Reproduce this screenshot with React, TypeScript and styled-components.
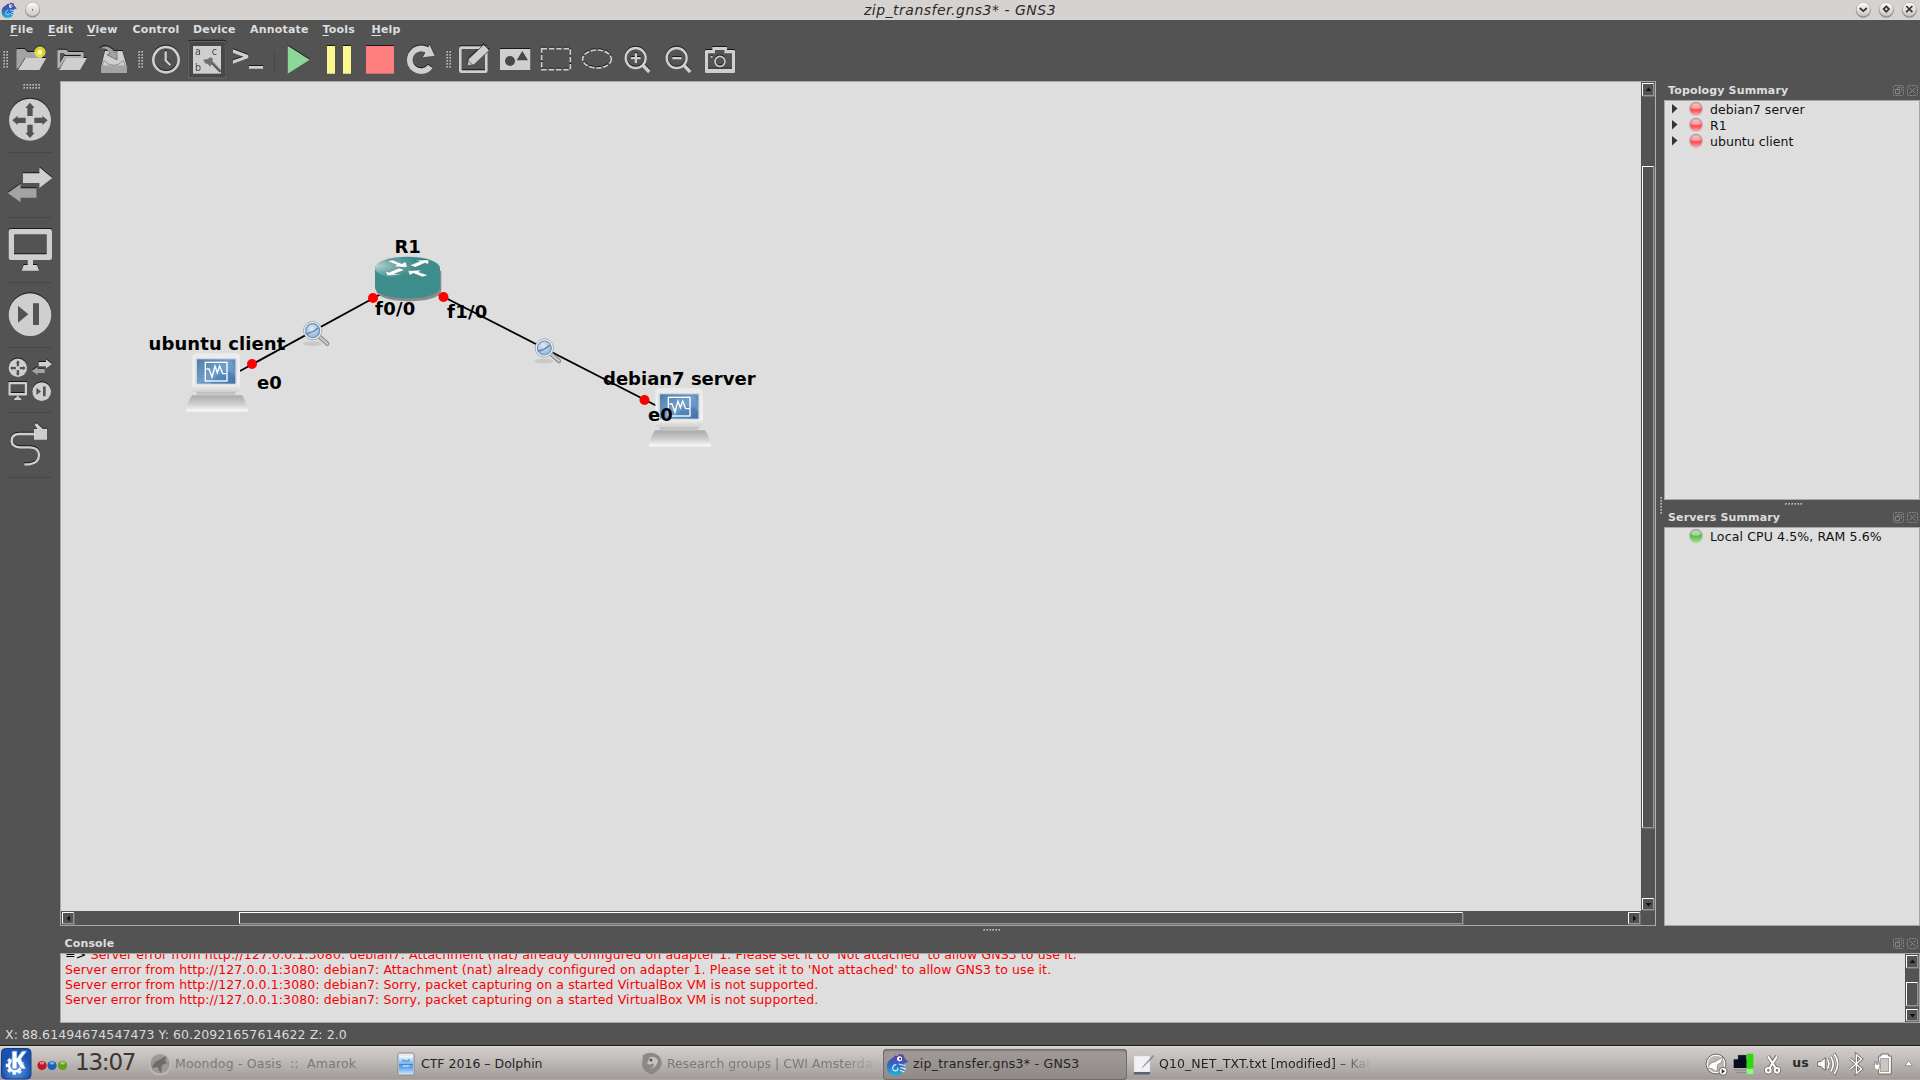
import React from "react";
import styled, { createGlobalStyle } from "styled-components";

const Global = createGlobalStyle`
  html, body { margin: 0; padding: 0; overflow: hidden; }
  body { background: #535353; font-family: "DejaVu Sans", "Liberation Sans", sans-serif; font-size: 12.5px; }
  * { box-sizing: border-box; }
  svg { display: block; flex: none; }
`;

const INK = "#cfcfcf";

const Screen = styled.div`
  width: 1920px; height: 1080px; display: flex; flex-direction: column;
  background: #535353; overflow: hidden; white-space: nowrap;
`;
const TitleBar = styled.header`
  height: 20px; flex: none; display: flex; justify-content: space-between;
  background: #d6d2cf; border-bottom: 1px solid #dad6d3;
`;
const TitleText = styled.div<{ $ls: number }>`
  font-style: italic; font-size: 14px; line-height: 20px; color: #2b2b2b; letter-spacing: ${p => p.$ls}px;
  padding-left: 23px;
`;
const MenuBar = styled.nav`height: 18px; flex: none; display: flex; padding-left: 10px;`;
const MenuItem = styled.div<{ $w: number }>`
  width: ${p => p.$w}px; font-weight: bold; font-size: 11px; line-height: 20px; color: #dedede;
  letter-spacing: 0.2px;
  u { text-underline-offset: 2px; text-decoration-thickness: 1px; }
`;
const Toolbar = styled.div`height: 43px; flex: none; display: flex;`;
const Shadowed = styled.svg`filter: drop-shadow(0 -1px 0.4px #181818);`;
const Workspace = styled.div`height: 845px; flex: none; display: flex;`;
const SideBar = styled.div`width: 60px; flex: none; display: flex; flex-direction: column;`;
const SideSlot = styled.div<{ $h: number }>`
  height: ${p => p.$h}px; width: 44px; margin-left: 8px; border-bottom: 1px solid #474747; flex: none;
  svg { margin-left: -8px; }
`;
const SceneFrame = styled.div`
  width: 1596px; flex: none; border: 1px solid #a6a6a6; border-right-color: #b0b0b0;
  display: grid; grid-template-columns: 1580px 14px; grid-template-rows: 829px 14px;
`;
const Scene = styled.div`position: relative; background: #dedede; overflow: hidden;`;
const NodeLabel = styled.div<{ $x: number; $y: number; $ls?: number }>`
  position: absolute; left: ${p => p.$x - 61}px; top: ${p => p.$y - 82}px;
  font-weight: bold; font-size: 18px; line-height: 20px; color: #000; letter-spacing: ${p => p.$ls ?? 0}px;
`;
const ScrollTrack = styled.div<{ $row?: boolean }>`
  display: flex; flex-direction: ${p => (p.$row ? "row" : "column")}; padding: 1px; background: #535353;
`;
const Bevel = styled.div<{ $w: number; $h: number }>`
  width: ${p => p.$w}px; height: ${p => p.$h}px; flex: none;
  border: 1px solid #fff; border-right-color: #959595; border-bottom-color: #959595;
  box-shadow: 1px 1px 0 #6f6f6f; display: flex; align-items: center; justify-content: center;
`;
const Space = styled.div<{ $s: number }>`flex: 0 0 ${p => p.$s}px;`;
const Splitter = styled.div`
  width: 8px; flex: none; display: flex; align-items: center; justify-content: center; padding: 4px 0 0 2px;
`;
const Dock = styled.aside`width: 256px; flex: none; display: flex; flex-direction: column;`;
const DockTitle = styled.div<{ $h: number; $pl: number }>`
  height: ${p => p.$h}px; flex: none; display: flex; justify-content: space-between; align-items: center;
  padding: 0 1px 1px ${p => p.$pl}px; font-weight: bold; font-size: 11px; color: #dedede;
  letter-spacing: 0.15px;
  svg { margin-top: 2px; }
`;
const ListFrame = styled.div<{ $h: number }>`
  height: ${p => p.$h}px; flex: none; border: 1px solid #a6a6a6; background: #dedede; color: #111;
`;
const TreeRow = styled.div<{ $ls?: number }>`
  height: 16px; display: flex; align-items: center; letter-spacing: ${p => p.$ls ?? 0.04}px; padding-top: 1px;
`;
const GripRow = styled.div<{ $h: number }>`
  height: ${p => p.$h}px; flex: none; display: flex; justify-content: center; padding: 3px 0 0 3px;
`;
const ConsoleFrame = styled.div`
  height: 70px; flex: none; margin-left: 60px; border: 1px solid #a6a6a6; background: #dedede;
  display: flex; justify-content: space-between; overflow: hidden;
`;
const Log = styled.div`margin-top: -7px; padding-left: 4px; color: #f60000;`;
const LogLine = styled.div`
  height: 15px; line-height: 15px; letter-spacing: 0.105px;
  b { font-weight: normal; color: #000; letter-spacing: 0.25px; }
`;
const Status = styled.div`
  height: 22px; flex: none; padding-left: 5px; line-height: 23px; color: #dadada; letter-spacing: 0.08px;
`;
const TaskBar = styled.footer`
  height: 35px; flex: none; display: flex; border-top: 1px solid #1d1a1c;
  background: linear-gradient(#dedad8 0, #cfcac8 3px, #c6c2bf 10px, #a19c99 33px, #b5b1ae 34px);
`;
const Clock = styled.div`width: 70px; font-size: 23px; line-height: 33px; color: #3a3634; letter-spacing: -1.2px;`;
const Task = styled.div<{ $active?: boolean; $dim?: boolean; $ls?: number }>`
  width: 244px; margin-right: 2px; height: 31px; margin-top: 3px; flex: none; display: flex; align-items: center;
  overflow: hidden; border-radius: 4px; letter-spacing: ${p => p.$ls ?? 0}px; padding-bottom: 2px;
  color: ${p => (p.$dim ? "#7c7876" : "#262322")};
  background: ${p => (p.$active ? "linear-gradient(#a19c9a, #8f8a88)" : "none")};
  box-shadow: ${p => (p.$active ? "inset 0 0 0 1px #716c6a, inset 0 2px 2px #807b79" : "none")};
  white-space: pre;
`;
const TaskIcon = styled.svg`margin: 0 4px 0 3px;`;
const Fade = styled.span`
  max-width: 212px; overflow: hidden;
  mask-image: linear-gradient(90deg, #000 176px, transparent 212px);
`;
const Tray = styled.div`display: flex; margin-left: auto;`;
const Layout = styled.div`
  width: 27px; text-align: center; font-weight: bold; font-size: 12.5px; line-height: 34px; color: #2b2928;
  letter-spacing: 0.2px;
`;

const Dots = ({ cols, rows, h = 3 }: { cols: number; rows: number; h?: number }) => (
  <svg width={cols * 3} height={rows * h}>
    {Array.from({ length: cols * rows }, (_, i) => {
      const x = (i % cols) * 3, y = Math.floor(i / cols) * h;
      return <g key={i}><rect x={x} y={y} width="2" height="2" fill="#8d8d8d" /><rect x={x + 1} y={y} width="1" height="1" fill="#c2c2c2" /></g>;
    })}
  </svg>
);
const Handle = styled.div<{ $w: number; $pl: number }>`width: ${p => p.$w}px; padding: 13px 0 0 ${p => p.$pl}px; flex: none;`;

/* toolbar glyphs are drawn on a grid of three units per pixel */
const Tool = ({ x, children }: { x: number; children: React.ReactNode }) => (
  <Shadowed width="41" height="43" viewBox={`${x} 114 123 129`} fill={INK}>{children}</Shadowed>
);
const FloatButtons = () => (
  <svg width="27" height="12" viewBox="0 0 27 12" fill="none" stroke="#858585">
    <rect x="1.5" y=".5" width="10" height="10" rx="1.5" strokeDasharray="2 .8" />
    <rect x="3.5" y="4.5" width="4" height="4" /><path d="M5.5 4V2.5h4v4H8" strokeDasharray="1.5 .7" />
    <rect x="15.5" y=".5" width="10" height="10" rx="1.5" strokeDasharray="2 .8" />
    <path d="M17.5 2.5l6 6M23.5 2.5l-6 6" />
  </svg>
);
const Arrow = ({ d }: { d: string }) => <svg width="7" height="7" viewBox="0 0 7 7"><path d={d} fill="#111" /></svg>;
const UP = "M.5 5L3.5 1.5L6.5 5z", DOWN = "M.5 2L3.5 5.5L6.5 2z", LEFT = "M5 .5L1.5 3.5L5 6.5z", RIGHT = "M2 .5L5.5 3.5L2 6.5z";

const WinButton = ({ d }: { d: string }) => (
  <svg width="23" height="20" viewBox="0 0 23 20">
    <circle cx="12.3" cy="10.2" r="7.5" fill="#8e8a87" />
    <circle cx="12.3" cy="9.3" r="7" fill="url(#btn)" stroke="#aaa6a3" strokeWidth=".6" />
    <path transform="translate(.8 0)" d={d} fill="none" stroke="#333" strokeWidth="1.7" />
  </svg>
);
const Ball = ({ c }: { c: "r" | "g" }) => (
  <svg width="16" height="16" viewBox="0 0 16 16">
    <circle cx="8" cy="6.6" r="6.8" fill={c === "r" ? "#a5a0a0" : "#96a393"} />
    <circle cx="8" cy="7.5" r="6.8" fill="#cdc8c8" opacity=".75" />
    <circle cx="8" cy="6.9" r="6" fill={`url(#ball${c})`} />
    <ellipse cx="8" cy="4.3" rx="4.2" ry="2.5" fill="#fff" opacity=".38" />
  </svg>
);
const Chameleon = () => (
  <>
    <path d="M6 4l2-2 2 .5L11.500 .5 13 1.500l2-.5 .5 2 1.500 2.500 2.500 2-3.500 1.500-1 2.500q1.500 4-2 6.500-4 2.500-8.500 1Q1 17 .8 12 .5 7 6 4z" fill="url(#cham)" />
    <circle cx="11.8" cy="5" r="2.2" fill="#fff" /><circle cx="12.3" cy="5" r=".9" fill="#222" />
    <path d="M9 10c-3.500 0-4.500 5-1 5.500 2.500.3 3-2 1.500-2.500M11 9.500l6 1.500M12.500 12.500l5 1.500M12 15l4 1.500" stroke="#d8efff" strokeWidth="1" fill="none" />
  </>
);
const RouterGlyph = () => (
  <>
    <circle cx="90" cy="119" r="63" />
    <g fill="#535353">
      {[0, 90, 180, 270].map(a => <path key={a} transform={`rotate(${a} 90 121)`} d="M90 68l14 16h-6v24H82V84h-6z" />)}
    </g>
  </>
);
const SwitchGlyph = () => (
  <><path d="M23 339l39-28v14h48v28H62v14z" fill="#a3a3a3" /><path d="M157 294l-39 30v-15H69v-29h49v-18z" /></>
);
const MonitorGlyph = () => (
  <>
    <path fillRule="evenodd" d="M33 447h116q7 0 7 7v79q0 7-7 7H33q-7 0-7-7v-79q0-7 7-7zM42 463v60h98v-60z" />
    <path d="M83 540h16v15h12l6 17H65l6-17h12z" />
  </>
);
const SkipGlyph = () => (
  <><circle cx="90" cy="704" r="64" /><path d="M54 677l31 26-31 25zM99 670h18v65H99z" fill="#535353" /></>
);

const VmNode = () => (
  <g>
    <path d="M187 526h147q8 0 20 46 0 5-8 5H174q-8 0-6-7 10-38 19-44z" fill="url(#kbd)" />
    <path d="M200 514h116v10H200z" fill="#c2c2c2" />
    <rect x="187" y="400" width="143" height="116" rx="12" fill="url(#case)" />
    <rect x="196" y="414" width="124" height="80" fill="#d8d8d8" />
    <rect x="201" y="418" width="115" height="73" fill="url(#vscreen)" />
    <path d="M201 418h100q20 26 14 52-30 -40-75 21H201z" fill="#fff" opacity=".13" />
    <rect x="226" y="427" width="65" height="56" fill="none" stroke="#fff" strokeWidth="4" />
    <path d="M229 447h8l9 24 9-33 7 20 7-20 9 23h12" fill="none" stroke="#fff" strokeWidth="4" />
  </g>
);
const Magnifier = () => (
  <g>
    <ellipse cx="547" cy="371" rx="28" ry="7" fill="#999" opacity=".3" />
    <path d="M567 349l25 22" stroke="#858585" strokeWidth="13" strokeLinecap="round" />
    <path d="M567 349l25 22" stroke="#c9c9c9" strokeWidth="7" strokeLinecap="round" />
    <circle cx="548" cy="332" r="27.5" fill="#f4f4f4" stroke="#9d9d9d" strokeWidth="2.5" />
    <circle cx="548" cy="332" r="21" fill="url(#lens)" stroke="#6591c6" strokeWidth="3.5" />
    <path d="M530 341q18-3 34-17" fill="none" stroke="#5a7088" strokeWidth="4.5" opacity=".8" />
  </g>
);

const Defs = () => (
  <defs>
    <linearGradient id="btn" x2="0" y2="1"><stop stopColor="#fdfdfc" /><stop offset="1" stopColor="#cac6c3" /></linearGradient>
    <linearGradient id="ballr" x2="0" y2="1"><stop stopColor="#e8a0a2" /><stop offset=".45" stopColor="#ff6c72" /><stop offset=".6" stopColor="#ff4c55" /><stop offset="1" stopColor="#ffa0a2" /></linearGradient>
    <linearGradient id="ballg" x2="0" y2="1"><stop stopColor="#a3c79b" /><stop offset=".5" stopColor="#62b853" /><stop offset="1" stopColor="#80f065" /></linearGradient>
    <linearGradient id="cham" x2="0" y2="1"><stop stopColor="#6a35a8" /><stop offset=".5" stopColor="#2f68c0" /><stop offset="1" stopColor="#1fb6dc" /></linearGradient>
    <linearGradient id="kbd" x2="0" y2="1"><stop stopColor="#aaa" /><stop offset=".5" stopColor="#cdcdcd" /><stop offset=".9" stopColor="#f6f6f6" /><stop offset="1" stopColor="#e2e2e2" /></linearGradient>
    <linearGradient id="case" x2="0" y2="1"><stop stopColor="#ebebeb" /><stop offset=".8" stopColor="#f1f1f1" /><stop offset="1" stopColor="#d0d0d0" /></linearGradient>
    <linearGradient id="vscreen" x2="1" y2="1"><stop stopColor="#336a9f" /><stop offset=".5" stopColor="#5d90c2" /><stop offset="1" stopColor="#3d74a9" /></linearGradient>
    <radialGradient id="lens" cx=".45" cy=".35"><stop stopColor="#dfeaf6" /><stop offset="1" stopColor="#a0bfe2" /></radialGradient>
    <radialGradient id="rtop" cx=".02" cy=".4" r=".62"><stop stopColor="#b5d0cf" /><stop offset=".5" stopColor="#70a9a8" /><stop offset="1" stopColor="#3e8d8d" /></radialGradient>
    <radialGradient id="kbg" cx=".5" cy=".7"><stop stopColor="#5aa4f0" /><stop offset="1" stopColor="#1b50ac" /></radialGradient>
    <linearGradient id="folder" x2="0" y2="1"><stop stopColor="#fafcff" /><stop offset=".3" stopColor="#9cc8f8" /><stop offset=".6" stopColor="#4e9cf0" /><stop offset="1" stopColor="#c8e2fb" /></linearGradient>
  </defs>
);

const SERVER = "Server error from http://127.0.0.1:3080: debian7: ";
const ATTACH = "Attachment (nat) already configured on adapter 1. Please set it to 'Not attached' to allow GNS3 to use it.";
const SORRY = "Sorry, packet capturing on a started VirtualBox VM is not supported.";
const MENUS: [string, string, number][] = [
  ["F", "ile", 38], ["E", "dit", 39], ["V", "iew", 45.5], ["", "Control", 60.5], ["", "Device", 57], ["", "Annotate", 72.5], ["T", "ools", 49], ["H", "elp", 40],
];

export default function App() {
  return (
    <Screen>
      <Global />
      <TitleBar>
        <svg width="46" height="20" viewBox="0 0 46 20">
          <Defs />
          <g transform="translate(1 2) scale(.82)"><Chameleon /></g>
          <circle cx="32.5" cy="10" r="7.5" fill="#8e8a87" /><circle cx="32.5" cy="9.2" r="7" fill="url(#btn)" stroke="#aaa6a3" strokeWidth=".6" />
          <rect x="32" y="9" width="1" height="1.5" fill="#555" />
        </svg>
        <TitleText $ls={0.5}>zip_transfer.gns3* - GNS3</TitleText>
        <svg width="69" height="20" viewBox="0 0 69 20">
          <WinButton d="M8 8l3.500 3.200L15 8" />
          <svg x="23"><WinButton d="M11.500 6.400l2.700 2.700-2.700 2.700-2.700-2.700z" /></svg>
          <svg x="46"><WinButton d="M8.400 6l6.200 6.200M14.600 6l-6.200 6.200" /></svg>
        </svg>
      </TitleBar>
      <MenuBar>
        {MENUS.map(([u, t, w]) => <MenuItem key={t} $w={w}>{u && <u>{u}</u>}{t}</MenuItem>)}
      </MenuBar>
      <Toolbar>
        <Handle $w={10} $pl={3}><Dots cols={2} rows={6} /></Handle>
        <Tool x={30}>
          <path d="M49 150q0-3 3-3h22l8 9h40q4 0 4 4v14H74l-18 30-7 2z" fill="#a2a4a6" />
          <path d="M76 174h63l-21 36H54z" /><circle cx="120" cy="156" r="17" fill="#f2e63c" opacity=".9" /><circle cx="120" cy="156" r="7" fill="#ffffb0" />
        </Tool>
        <Tool x={153}>
          <path fillRule="evenodd" d="M172 152q0-3 3-3h24l6 7h42q4 0 4 4v14H198l-18 28-8 4zM180 162v26l12-20h50v-4h-46l-5-5h-10z" fill="#b0b1b3" />
          <path d="M198 174h63l-21 36H177z" />
        </Tool>
        <Tool x={276}>
          <path d="M315 153h52l13 44v22h-76v-22z" /><path d="M304 200h77v19h-77z" fill="#a2a4a6" />
          <path d="M312 182q28 28 58 0l6 16h-70z" fill="none" stroke="#777" strokeWidth="2" />
          <path d="M297 148q20-20 42 2l4 8 8-6v28l-30-16 10-4q-14-20-34-12z" fill="#a2a4a6" stroke="#555" strokeWidth="2" />
        </Tool>
        <Handle $w={13} $pl={5}><Dots cols={2} rows={6} /></Handle>
        <Tool x={438}>
          <circle cx="498" cy="179" r="38" fill="none" stroke={INK} strokeWidth="8" />
          <path d="M497 154v27l14 14" fill="none" stroke={INK} strokeWidth="7" />
        </Tool>
        <Tool x={561}>
          <rect x="565" y="124" width="113" height="110" rx="6" fill="#484848" stroke="#6c6c6c" strokeWidth="3" />
          <rect x="579" y="138" width="84" height="83" />
          <g fill="#484848" fontFamily="DejaVu Sans" fontSize="29"><text x="585" y="164">a</text><text x="635" y="165">c</text><text x="585" y="212">b</text></g>
          <path d="M636 188l26 27" stroke="#484848" strokeWidth="8" /><path d="M638 188l24 25" stroke="#999" strokeWidth="3" />
          <path d="M610 179l14-2 6-5 8 3 0 13-8 12-6-8-9-2z" fill="#6f6f6f" />
        </Tool>
        <Tool x={684}>
          <path d="M699 148l46 17v9l-46 17v-10l31-11-31-12zM747 198h42v8h-42z" />
        </Tool>
        <Space $s={5} />
        <svg width="4" height="43"><rect y="14" width="1" height="22" fill="#474747" /></svg>
        <Tool x={834}><path d="M863 137l66 42-66 42z" fill="#8bd897" /></Tool>
        <Tool x={957}><path d="M981 138h24v83h-24zM1029 138h24v83h-24z" fill="#fdf68d" /></Tool>
        <Tool x={1080}><path d="M1098 138h84v83h-84z" fill="#ff7f7f" /></Tool>
        <Tool x={3}>
          <path d="M91 199a34 34 0 1 1-3-43" fill="none" stroke={INK} strokeWidth="17" />
          <path d="M89 134l15 33-36 5z" />
        </Tool>
        <Handle $w={12} $pl={4}><Dots cols={2} rows={6} /></Handle>
        <Tool x={162}>
          <rect x="181" y="143" width="78" height="72" rx="3" fill="none" stroke={INK} strokeWidth="8" />
          <path d="M202 197l3-20 46-43 17 17-46 43z" stroke="#535353" strokeWidth="3" /><path d="M206 183l10 10" stroke="#666" strokeWidth="3" />
        </Tool>
        <Tool x={285}>
          <path d="M300 147h91v63h-91z" /><circle cx="330" cy="183" r="15" fill="#484848" /><path d="M367 153l17 28h-34z" fill="#484848" />
        </Tool>
        <Tool x={408}>
          <rect x="425" y="146" width="86" height="63" fill="none" stroke={INK} strokeWidth="5" strokeDasharray="16 6" />
        </Tool>
        <Tool x={531}>
          <ellipse cx="591" cy="177" rx="43" ry="27" fill="none" stroke={INK} strokeWidth="5" strokeDasharray="16 5" />
        </Tool>
        <Tool x={654}>
          <circle cx="707" cy="174" r="30" fill="none" stroke={INK} strokeWidth="7" /><path d="M728 195l20 21" stroke={INK} strokeWidth="10" />
          <path d="M704 160h7v11h11v7h-11v11h-7v-11h-11v-7h11z" />
        </Tool>
        <Tool x={777}>
          <circle cx="830" cy="174" r="30" fill="none" stroke={INK} strokeWidth="7" /><path d="M851 195l20 21" stroke={INK} strokeWidth="10" />
          <path d="M817 171h28v7h-28z" />
        </Tool>
        <Tool x={900}>
          <path fillRule="evenodd" d="M937 150v-9h44v9h20q4 0 4 4v61q0 4-4 4h-82q-4 0-4-4v-61q0-4 4-4zM924 160v46h72v-46h-23v-10h-28v10z" />
          <circle cx="960" cy="184" r="15" fill="none" stroke={INK} strokeWidth="5" /><circle cx="935" cy="170" r="3" />
        </Tool>
      </Toolbar>
      <Workspace>
        <SideBar>
          <GripRow $h={9}><Dots cols={6} rows={2} /></GripRow>
          <SideSlot $h={63}><Shadowed width="60" height="62" viewBox="0 30 180 186" fill={INK}><RouterGlyph /></Shadowed></SideSlot>
          <SideSlot $h={65}><Shadowed width="60" height="64" viewBox="0 219 180 192" fill={INK}><SwitchGlyph /></Shadowed></SideSlot>
          <SideSlot $h={65}><Shadowed width="60" height="64" viewBox="0 414 180 192" fill={INK}><MonitorGlyph /></Shadowed></SideSlot>
          <SideSlot $h={65}><Shadowed width="60" height="64" viewBox="0 609 180 192" fill={INK}><SkipGlyph /></Shadowed></SideSlot>
          <SideSlot $h={65}>
            <Shadowed width="60" height="64" viewBox="0 804 180 192" fill={INK}>
              <g transform="translate(14 811) scale(.44)"><RouterGlyph /></g>
              <g transform="translate(85 720) scale(.45)"><SwitchGlyph /></g>
              <g transform="translate(14 714) scale(.43)"><MonitorGlyph /></g>
              <g transform="translate(85.5 625) scale(.44)"><SkipGlyph /></g>
            </Shadowed>
          </SideSlot>
          <SideSlot $h={65}>
            <Shadowed width="60" height="64" viewBox="0 999 180 192" fill={INK}>
              <path d="M102 1062H58q-23 0-23 20 0 18 25 20h30q27 2 27 22 0 25-30 29H73" fill="none" stroke={INK} strokeWidth="7" />
              <path d="M102 1046h10l-8-12 6-5 18 17h13v33h-39z" />
            </Shadowed>
          </SideSlot>
        </SideBar>
        <SceneFrame>
          <Scene>
            <svg width="1580" height="829" viewBox="61 82 1580 829">
              <path d="M240 371L381 294M434 292L656 405.500" stroke="#000" strokeWidth="1.8" />
              <g fill="#f00"><circle cx="252" cy="364" r="5" /><circle cx="373" cy="298" r="5" /><circle cx="443.5" cy="297" r="5" /><circle cx="644.5" cy="400" r="5" /></g>
              <g transform="translate(130 220) scale(.33333)">
                <path d="M738 152v58c0 44 196 46 196 0v-58z" fill="#8b8b8f" />
                <path d="M735 146v56c0 45 195 45 195 0v-56z" fill="#3e8d8d" />
                <ellipse cx="832" cy="144" rx="98" ry="34" fill="url(#rtop)" />
                <g fill="#fff" stroke="#2b5e5e" strokeWidth="1">
                  <path d="M771 123l17-3 27 11 12-6 5 17-42-2 10-5z" />
                  <path d="M840 136l29-12-15-3 42-1-1 13-10-4-29 13z" />
                  <path d="M824 150l-30 11 27 2-49 4-6-14 11 4 30-13z" />
                  <path d="M834 152l41-2-9 6 28 10-16 5-28-11-11 6z" />
                </g>
                <VmNode />
                <g transform="translate(1389 105)"><VmNode /></g>
                <Magnifier />
                <g transform="translate(695 52)"><Magnifier /></g>
              </g>
            </svg>
            <NodeLabel $x={394.5} $y={237}>R1</NodeLabel>
            <NodeLabel $x={375} $y={299} $ls={0.3}>f0/0</NodeLabel>
            <NodeLabel $x={447} $y={302} $ls={0.3}>f1/0</NodeLabel>
            <NodeLabel $x={148.5} $y={334} $ls={0.1}>ubuntu client</NodeLabel>
            <NodeLabel $x={257} $y={373}>e0</NodeLabel>
            <NodeLabel $x={603} $y={369}>debian7 server</NodeLabel>
            <NodeLabel $x={648} $y={405}>e0</NodeLabel>
          </Scene>
          <ScrollTrack>
            <Bevel $w={12} $h={13}><Arrow d={UP} /></Bevel>
            <Space $s={70} />
            <Bevel $w={12} $h={662} />
            <Space $s={70} />
            <Bevel $w={12} $h={12}><Arrow d={DOWN} /></Bevel>
          </ScrollTrack>
          <ScrollTrack $row>
            <Bevel $w={12} $h={12}><Arrow d={LEFT} /></Bevel>
            <Space $s={165} />
            <Bevel $w={1224} $h={12} />
            <Space $s={165} />
            <Bevel $w={12} $h={12}><Arrow d={RIGHT} /></Bevel>
          </ScrollTrack>
        </SceneFrame>
        <Splitter><Dots cols={1} rows={6} /></Splitter>
        <Dock>
          <DockTitle $h={19} $pl={4}>Topology Summary<FloatButtons /></DockTitle>
          <ListFrame $h={400}>
            {["debian7 server", "R1", "ubuntu client"].map(n => (
              <TreeRow key={n}>
                <svg width="23" height="15" viewBox="0 0 23 15"><path d="M7 2l5.500 4.500L7 11.500z" fill="#333" /></svg>
                <Ball c="r" /><Space $s={6} />{n}
              </TreeRow>
            ))}
          </ListFrame>
          <GripRow $h={8}><Dots cols={6} rows={1} /></GripRow>
          <DockTitle $h={19} $pl={4}>Servers Summary<FloatButtons /></DockTitle>
          <ListFrame $h={399}>
            <TreeRow $ls={0.13}><Space $s={23} /><Ball c="g" /><Space $s={6} />Local CPU 4.5%, RAM 5.6%</TreeRow>
          </ListFrame>
        </Dock>
      </Workspace>
      <GripRow $h={8}><Space $s={61} /><Dots cols={6} rows={1} /></GripRow>
      <DockTitle $h={19} $pl={64.5}>Console<FloatButtons /></DockTitle>
      <ConsoleFrame>
        <Log>
          <LogLine><b>=&gt; </b>{SERVER}{ATTACH}</LogLine>
          <LogLine>{SERVER}{ATTACH}</LogLine>
          <LogLine>{SERVER}{SORRY}</LogLine>
          <LogLine>{SERVER}{SORRY}</LogLine>
        </Log>
        <ScrollTrack>
          <Bevel $w={12} $h={13}><Arrow d={UP} /></Bevel>
          <Space $s={14} />
          <Bevel $w={12} $h={24} />
          <Space $s={3} />
          <Bevel $w={12} $h={12}><Arrow d={DOWN} /></Bevel>
        </ScrollTrack>
      </ConsoleFrame>
      <Status>X: 88.61494674547473 Y: 60.20921657614622 Z: 2.0</Status>
      <TaskBar>
        <svg width="75" height="34" viewBox="0 0 75 34">
          <rect x="1.5" y="2.5" width="29.5" height="30.5" rx="4" fill="url(#kbg)" stroke="#173f8b" />
          <circle cx="15" cy="19.5" r="7.5" fill="none" stroke="#fff" strokeWidth="3.5" strokeDasharray="3 2.5" />
          <circle cx="15" cy="19.5" r="6" fill="none" stroke="#fff" strokeWidth="2.5" />
          <path d="M12 5h5v7l5-7h5l-6 8 5 10h-5l-4-7v7h-5z" fill="#fff" stroke="#3f7fd2" strokeWidth=".8" />
          <circle cx="42" cy="19.5" r="4.6" fill="#c4161c" /><circle cx="52" cy="19.5" r="4.6" fill="#1a62b4" /><circle cx="62.5" cy="19.5" r="4.6" fill="#62a012" />
          <g fill="#fff" opacity=".45"><ellipse cx="42" cy="17" rx="2.5" ry="1.5" /><ellipse cx="52" cy="17" rx="2.5" ry="1.5" /><ellipse cx="62.5" cy="17" rx="2.5" ry="1.5" /></g>
        </svg>
        <Clock>13:07</Clock>
        <Task $dim $ls={0.18}>
          <TaskIcon width="23" height="24" viewBox="0 0 23 24">
            <circle cx="12" cy="12" r="10.5" fill="#9b9997" stroke="#c2bfbc" strokeWidth="1.4" />
            <path d="M4 16q1-6 7-8l7-4-1 5 2 2-5 2-1 8q-3-3-3-6z" fill="#6f6d6c" />
          </TaskIcon>
          Moondog - Oasis  ::  Amarok
        </Task>
        <Task>
          <TaskIcon width="23" height="24" viewBox="0 0 23 24">
            <rect x="4" y="1" width="16" height="22" rx="1.5" fill="#e8e8e8" stroke="#777" strokeWidth=".8" />
            <rect x="5" y="4" width="14" height="18" fill="url(#folder)" /><path d="M5 12.500h14M9 7v2h6V7" stroke="#4a82c0" fill="none" /><path d="M9 14h6" stroke="#fff" />
          </TaskIcon>
          CTF 2016 – Dolphin
        </Task>
        <Task $dim>
          <TaskIcon width="23" height="24" viewBox="0 0 23 24">
            <path d="M3 3q9-5 16 1 6 8-1 14-4 5-8 4-7-3-8-9z" fill="#8b8886" />
            <path d="M10 5q6-1 8 4-2 7-8 8 6-3 3-6-3 3-6 0z" fill="#c6c3c1" /><circle cx="11" cy="8" r="1.5" fill="#555" />
          </TaskIcon>
          <Fade>Research groups | CWI Amsterdam</Fade>
        </Task>
        <Task $active $ls={0.24}>
          <TaskIcon width="23" height="24" viewBox="0 -.5 20 20"><Chameleon /></TaskIcon>
          zip_transfer.gns3* - GNS3
        </Task>
        <Task $ls={0.08}>
          <TaskIcon width="23" height="24" viewBox="0 0 23 24">
            <rect x="2" y="4" width="16" height="16" fill="#f3f1f5" stroke="#cfcdd2" strokeWidth=".5" /><path d="M2 20h16v2.500H2z" fill="#566275" />
            <path d="M9 17l3-4 9-10 1.500 1-10 10z" fill="#8b8f92" />
          </TaskIcon>
          <Fade>Q10_NET_TXT.txt [modified] – Kate</Fade>
        </Task>
        <Tray>
          <svg width="30" height="34" viewBox="420 468 90 102">
            <circle cx="468" cy="522" r="30" fill="#d8d6d4" stroke="#6f6c6a" strokeWidth="3" /><circle cx="468" cy="522" r="26" fill="#b9b6b4" stroke="#fff" strokeWidth="3" />
            <path d="M444 535q4-18 22-20l22-14-3 15-12 8-3 22q-14-14-26-11z" fill="#fff" stroke="#777" strokeWidth="2" />
            <circle cx="489" cy="544" r="12" fill="#fff" stroke="#6f6c6a" strokeWidth="3" /><path d="M485 537l10 7-10 7z" fill="#333" />
          </svg>
          <svg width="27" height="34" viewBox="510 468 81 102">
            <path d="M534 495h25v26h-25z" fill="#0a1224" stroke="#777" /><path d="M521 508h39v26h-39z" fill="#060c1c" /><path d="M522 540h36M530 548h28" stroke="#888" strokeWidth="3" />
            <path d="M560 491h20v61h-20z" fill="#2ed80f" /><path d="M560 536h20v16h-20z" fill="#9df08a" />
          </svg>
          <svg width="30" height="34" viewBox="591 468 90 102">
            <g fill="none" stroke="#6f6c6a" strokeWidth="11"><path d="M624 498l22 34M651 498l-22 34" /><circle cx="625" cy="541" r="7" /><circle cx="651" cy="541" r="7" /></g>
            <g fill="none" stroke="#fff" strokeWidth="6"><path d="M624 499l22 34M651 499l-22 34" /><circle cx="625" cy="541" r="7" /><circle cx="651" cy="541" r="7" /></g>
          </svg>
          <Layout>us</Layout>
          <svg width="28" height="34" viewBox="762 468 84 102">
            <path d="M773 515h9l14-12v38l-14-12h-9z" fill="#fff" stroke="#6f6c6a" strokeWidth="3" />
            <g fill="none" stroke="#6f6c6a" strokeWidth="9"><path d="M802 507q9 15 0 30M812 498q15 24 0 48M823 490q20 31 0 64" /></g>
            <g fill="none" stroke="#fff" strokeWidth="5"><path d="M802 508q9 14 0 28M812 499q15 23 0 46M823 492q20 30 0 60" /></g>
          </svg>
          <svg width="29" height="34" viewBox="846 468 87 102" fill="none">
            <path d="M870 506l35 31-16 13v-56l16 13-35 31" stroke="#6f6c6a" strokeWidth="9" /><path d="M870 506l35 31-16 13v-56l16 13-35 31" stroke="#fff" strokeWidth="4" />
          </svg>
          <svg width="25" height="34" viewBox="933 468 75 102">
            <path d="M956 498h7v-6h22v6h9v54h-38z" fill="#fff" stroke="#6f6c6a" strokeWidth="3" /><rect x="962" y="505" width="24" height="40" fill="#c9c6c4" stroke="#8a8785" strokeWidth="2" />
            <path d="M942 523h3v-8h4v8h5v-8h4v8h2q1 14-6 17h-5q-8-4-7-17z" fill="#fff" stroke="#6f6c6a" strokeWidth="2" /><path d="M947 542h7v8h-7z" fill="#f0a030" />
          </svg>
          <svg width="24" height="34" viewBox="1008 468 72 102"><path d="M1046 512l11 15h-22z" fill="#fff" stroke="#777" strokeWidth="2" /></svg>
        </Tray>
      </TaskBar>
    </Screen>
  );
}
